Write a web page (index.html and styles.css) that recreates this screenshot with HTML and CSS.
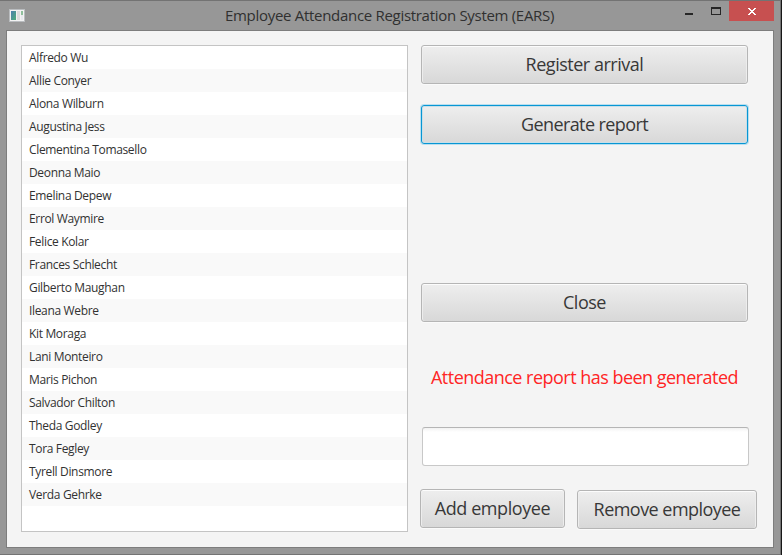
FILE: index.html
```html
<!DOCTYPE html>
<html lang="en">
<head>
<meta charset="utf-8">
<title>Employee Attendance Registration System (EARS)</title>
<link rel="stylesheet" href="styles.css">
</head>
<body>
<div class="window">
  <header class="titlebar">
    <svg class="app-icon" width="16" height="14" viewBox="0 0 16 14">
      <defs><linearGradient id="pane" x1="0" y1="0" x2="1" y2="1"><stop offset="0" stop-color="#4b7fae"/><stop offset="1" stop-color="#4fae78"/></linearGradient></defs>
      <rect x=".5" y=".5" width="15" height="12" fill="#f2f2f2" stroke="#b9bcbf"/>
      <rect x="2" y="2" width="5" height="9" fill="url(#pane)"/>
      <rect x="8" y="2" width="3" height="9" fill="#dcdcdc"/>
      <rect x="12" y="2" width="2" height="4" fill="#8fbf9c"/>
      <rect x="12" y="6" width="2" height="5" fill="#e8e8ee"/>
    </svg>
    <h1 class="title">Employee Attendance Registration System (EARS)</h1>
    <div class="controls">
      <svg class="control" width="8" height="2"><rect width="8" height="2" fill="#262626"/></svg>
      <svg class="control maximize" width="10" height="8"><path d="M0 0h10v8H0zM1 2v5h8V2z" fill="#262626" fill-rule="evenodd"/></svg>
      <div class="close"><svg width="8" height="7" viewBox="0 0 8 7" shape-rendering="crispEdges"><path d="M0 0h2v1h1v1h2V1h1V0h2v1H7v1H6v1H5v1h1v1h1v1h1v1H6V6H5V5H3v1H2v1H0V6h1V5h1V4h1V3H2V2H1V1H0z" fill="#fff"/></svg></div>
    </div>
  </header>
  <main class="content">
    <ul class="list">
      <li>Alfredo Wu</li><li>Allie Conyer</li><li>Alona Wilburn</li><li>Augustina Jess</li><li>Clementina Tomasello</li><li>Deonna Maio</li><li>Emelina Depew</li><li>Errol Waymire</li><li>Felice Kolar</li><li>Frances Schlecht</li><li>Gilberto Maughan</li><li>Ileana Webre</li><li>Kit Moraga</li><li>Lani Monteiro</li><li>Maris Pichon</li><li>Salvador Chilton</li><li>Theda Godley</li><li>Tora Fegley</li><li>Tyrell Dinsmore</li><li>Verda Gehrke</li>
    </ul>
    <section class="panel">
      <button class="button register">Register arrival</button>
      <button class="button generate">Generate report</button>
      <button class="button exit">Close</button>
      <p class="message">Attendance report has been generated</p>
      <input class="field" type="text" aria-label="Employee name">
      <div class="actions">
        <button class="button add">Add employee</button>
        <button class="button remove">Remove employee</button>
      </div>
    </section>
  </main>
</div>
</body>
</html>
```
FILE: styles.css
```css
* { box-sizing: border-box; }
body {
  margin: 0;
  width: 782px;
  height: 555px;
  overflow: hidden;
  background: #171717;
  color: #323232;
  font-family: "Open Sans", "Noto Sans", sans-serif;
}
.window {
  width: 781px;
  height: 555px;
  padding: 0 6px;
  background: #979797;
  border: 1px solid #737373;
  border-left: 0;
}
.titlebar {
  display: flex;
  height: 29px;
  margin-right: -6px;
  align-items: flex-start;
}
.app-icon { margin: 8px 0 0 3px; flex: none; }
.title {
  margin: 4px 0 0 200px;
  width: 331px;
  font-size: 15px;
  line-height: 21px;
  font-weight: 400;
  letter-spacing: -0.3px;
  white-space: nowrap;
  color: #303030;
}
.controls { display: flex; margin-left: auto; align-items: flex-start; }
.control { margin-top: 12px; }
.maximize { margin: 6px 8px 0 18px; }
.close {
  display: flex;
  width: 45px;
  height: 20px;
  margin-right: 6px;
  padding-top: 1px;
  align-items: center;
  justify-content: center;
  background: #c75050;
}
.content {
  display: flex;
  width: 768px;
  height: 518px;
  padding: 14px 0 0 14px;
  background: #f4f4f4;
  border: 1px solid #7d7d7d;
}
.list {
  width: 387px;
  height: 487px;
  margin: 0;
  padding: 0;
  list-style: none;
  background: #fff;
  border: 1px solid #c4c4c4;
  font-size: 12px;
  line-height: 23px;
  letter-spacing: -0.34px;
}
.list li { height: 23px; padding-left: 7px; }
.list li:nth-child(even) { background: #f9f9f9; }
.panel { display: flex; flex-direction: column; margin-left: 13px; width: 327px; }
.button {
  flex: none;
  height: 39px;
  padding: 0 0 1px;
  border: 1px solid #b5b5b5;
  border-radius: 3px;
  background: linear-gradient(#eeeeee, #d8d8d8);
  box-shadow: inset 0 1px #fcfcfc, inset 1px 0 #ededed, inset -1px 0 #ededed, 0 1px #fafafa;
  color: #383838;
  font: 18px/26px "Open Sans", "Noto Sans", sans-serif;
  letter-spacing: -0.48px;
  white-space: nowrap;
}
.generate {
  margin-top: 21px;
  border-color: #0796d4;
  box-shadow: 0 0 0 1px #b9dfef, inset 0 0 0 1px #c9dfe8;
  letter-spacing: -0.6px;
}
.exit { margin-top: 139px; }
.message {
  margin: 42px 0 0 10px;
  font-size: 18px;
  line-height: 26px;
  letter-spacing: -0.52px;
  white-space: nowrap;
  color: #ff2525;
}
.field {
  flex: none;
  width: 327px;
  height: 39px;
  margin: 37px 0 0 1px;
  padding: 0 10px;
  border: 1px solid #c8c8c8;
  border-top-color: #b5b5b5;
  border-radius: 3px;
  background: linear-gradient(#f2f2f2, #fff 4px);
  font: 18px "Open Sans", sans-serif;
}
.actions { display: flex; width: 337px; margin: 23px 0 0 -1px; gap: 12px; }
.add { width: 145px; letter-spacing: -0.42px; }
.remove { width: 180px; margin-top: 1px; letter-spacing: -0.54px; }
```
